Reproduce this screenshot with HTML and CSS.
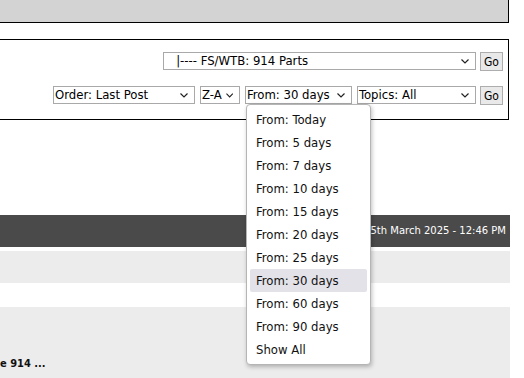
FILE: index.html
```html
<!DOCTYPE html>
<html lang="en">
  <head>
    <meta charset="UTF-8" />
    <title>Forum</title>
    <link rel="stylesheet" href="styles.css">
  </head>
  <body>
    <div class="pagina">
      <div class="barra-gris"></div>

      <form class="filtros">
        <div class="fila">
          <div class="campo ancho-foro"><span class="texto">&nbsp;&nbsp;&nbsp;|---- FS/WTB: 914 Parts</span><svg class="flecha" width="8" height="5" viewBox="0 0 8 5"><path d="M0.5 0.5 L4 4 L7.5 0.5" fill="none" stroke="#222" stroke-width="1.2"/></svg></div>
          <button type="button" class="boton">Go</button>
        </div>
        <div class="fila">
          <div class="campo ancho-orden"><span class="texto">Order: Last Post</span><svg class="flecha" width="8" height="5" viewBox="0 0 8 5"><path d="M0.5 0.5 L4 4 L7.5 0.5" fill="none" stroke="#222" stroke-width="1.2"/></svg></div>
          <div class="campo ancho-za"><span class="texto">Z-A</span><svg class="flecha" width="8" height="5" viewBox="0 0 8 5"><path d="M0.5 0.5 L4 4 L7.5 0.5" fill="none" stroke="#222" stroke-width="1.2"/></svg></div>
          <div class="campo ancho-desde abierto"><span class="texto">From: 30 days</span><svg class="flecha" width="8" height="5" viewBox="0 0 8 5"><path d="M0.5 0.5 L4 4 L7.5 0.5" fill="none" stroke="#222" stroke-width="1.2"/></svg>
            <ul class="desplegable">
              <li>From: Today</li>
              <li>From: 5 days</li>
              <li>From: 7 days</li>
              <li>From: 10 days</li>
              <li>From: 15 days</li>
              <li>From: 20 days</li>
              <li>From: 25 days</li>
              <li class="marcado">From: 30 days</li>
              <li>From: 60 days</li>
              <li>From: 90 days</li>
              <li>Show All</li>
            </ul>
          </div>
          <div class="campo ancho-temas"><span class="texto">Topics: All</span><svg class="flecha" width="8" height="5" viewBox="0 0 8 5"><path d="M0.5 0.5 L4 4 L7.5 0.5" fill="none" stroke="#222" stroke-width="1.2"/></svg></div>
          <button type="button" class="boton">Go</button>
        </div>
      </form>

      <div class="pie-oscuro">Today is 5th March 2025 - 12:46 PM</div>
      <div class="franja gris"></div>
      <div class="franja blanca"></div>
      <div class="franja gris alta"><span class="titulo">e 914 ...</span></div>
    </div>
  </body>
</html>
```

FILE: styles.css
```css
body {
  margin: 0;
  background: white;
  font-family: "DejaVu Sans Condensed", "DejaVu Sans", Verdana, sans-serif;
  color: #000;
}
.pagina {
  width: 510px;
}

/* caja gris de arriba */
.barra-gris {
  height: 22px;
  background-color: #d3d3d3;
  border-right: 1px solid #000;
  border-bottom: 1px solid #000;
  width: 508px;
}

/* caja con los selectores */
.filtros {
  margin-top: 16px;
  width: 503px;
  border-top: 1px solid #000;
  border-right: 1px solid #000;
  border-bottom: 1px solid #000;
  padding: 12px 5px 14px 0;
  display: flex;
  flex-direction: column;
  gap: 15px;
}
.fila {
  display: flex;
  justify-content: flex-end;
  align-items: flex-start;
  gap: 5px;
}
.fila .boton {
  margin-left: -1px;
}
.campo {
  position: relative;
  height: 16px;
  border: 1px solid #a9a9a9;
  display: flex;
  align-items: center;
  font-size: 13px;
  padding-left: 1px;
  box-sizing: content-box;
  background: white;
}
.campo .texto {
  flex: 1;
  white-space: pre;
  line-height: 16px;
}
.campo .flecha {
  margin: 0 6px 0 4px;
}
.ancho-foro { width: 310px; }
.ancho-orden { width: 139px; }
.ancho-za { width: 37px; }
.ancho-desde { width: 104px; }
.ancho-temas { width: 116px; }

.boton {
  width: 23px;
  height: 19px;
  padding: 0;
  border: 1px solid #adadad;
  background-color: #e9e9e9;
  font-family: inherit;
  font-size: 12px;
  color: #000;
}

/* lista abierta */
.desplegable {
  position: absolute;
  top: 17px;
  left: 0;
  width: 117px;
  margin: 0;
  padding: 3px;
  list-style: none;
  background: white;
  border: 1px solid #b5b5b5;
  border-radius: 4px;
  box-shadow: 1px 2px 4px rgba(0, 0, 0, 0.25);
  z-index: 2;
}
.desplegable li {
  height: 23px;
  line-height: 23px;
  padding-left: 6px;
  font-size: 13px;
  color: #111;
  border-radius: 2px;
}
.desplegable .marcado {
  background-color: #e3e2e8;
}

/* parte de abajo */
.pie-oscuro {
  margin-top: 95px;
  height: 32px;
  line-height: 32px;
  background-color: #4a4a4a;
  color: white;
  font-family: "DejaVu Sans", Verdana, sans-serif;
  font-size: 10px;
  text-align: right;
  padding-right: 4px;
}
.franja {
  margin-top: 4px;
}
.gris {
  height: 32px;
  background-color: #ececec;
}
.blanca {
  height: 16px;
  background: white;
}
.alta {
  height: 75px;
}
.titulo {
  display: block;
  padding-top: 50px;
  font-size: 11px;
  font-weight: bold;
  color: #111;
}
```
